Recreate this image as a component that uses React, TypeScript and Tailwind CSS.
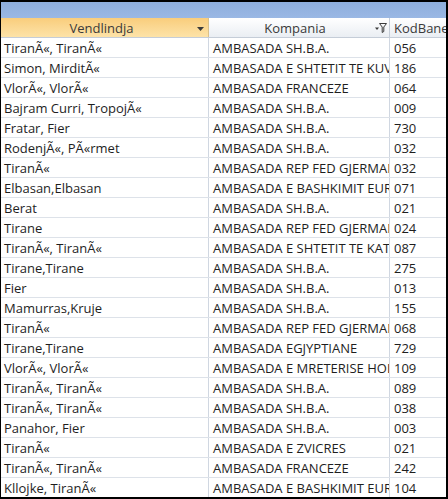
import React from "react";

const rows: [string, string, string][] = [
  ["TiranÃ«, TiranÃ«", "AMBASADA SH.B.A.", "056"],
  ["Simon, MirditÃ«", "AMBASADA E SHTETIT TE KUVAJTIT", "186"],
  ["VlorÃ«, VlorÃ«", "AMBASADA FRANCEZE", "064"],
  ["Bajram Curri, TropojÃ«", "AMBASADA SH.B.A.", "009"],
  ["Fratar, Fier", "AMBASADA SH.B.A.", "730"],
  ["RodenjÃ«, PÃ«rmet", "AMBASADA SH.B.A.", "032"],
  ["TiranÃ«", "AMBASADA REP FED GJERMANE", "032"],
  ["Elbasan,Elbasan", "AMBASADA E BASHKIMIT EUROPIAN", "071"],
  ["Berat", "AMBASADA SH.B.A.", "021"],
  ["Tirane", "AMBASADA REP FED GJERMANE", "024"],
  ["TiranÃ«, TiranÃ«", "AMBASADA E SHTETIT TE KATARIT", "087"],
  ["Tirane,Tirane", "AMBASADA SH.B.A.", "275"],
  ["Fier", "AMBASADA SH.B.A.", "013"],
  ["Mamurras,Kruje", "AMBASADA SH.B.A.", "155"],
  ["TiranÃ«", "AMBASADA REP FED GJERMANE", "068"],
  ["Tirane,Tirane", "AMBASADA EGJYPTIANE", "729"],
  ["VlorÃ«, VlorÃ«", "AMBASADA E MRETERISE HOLANDEZE", "109"],
  ["TiranÃ«, TiranÃ«", "AMBASADA SH.B.A.", "089"],
  ["TiranÃ«, TiranÃ«", "AMBASADA SH.B.A.", "038"],
  ["Panahor, Fier", "AMBASADA SH.B.A.", "003"],
  ["TiranÃ«", "AMBASADA E ZVICRES", "021"],
  ["TiranÃ«, TiranÃ«", "AMBASADA FRANCEZE", "242"],
  ["Kllojke, TiranÃ«", "AMBASADA E BASHKIMIT EUROPIAN", "104"],
];

export default function App() {
  return (
    <div
      className="w-[448px] h-[499px] overflow-hidden bg-black border-t-2 border-l border-r-2 border-b-2 border-black flex flex-col"
      style={{ fontFamily: '"Open Sans", "Noto Sans", sans-serif' }}
    >
      <div className="h-[16px] shrink-0 bg-gradient-to-b from-[#8eaedd] to-[#9ab8e4]" />
      <div className="flex-1 overflow-hidden bg-white text-[13px] leading-[20px] text-[#1e1e1e]">
        {/* header */}
        <div className="flex h-[20px] border-b border-[#c5cdd8]">
          <div className="w-[208px] shrink-0 flex items-center relative bg-gradient-to-b from-[#f9cd7c] to-[#fde3a8] border-r border-[#d9c08a] text-[#3a3a3a]">
            <span className="flex-1 text-center pr-[6px]">Vendlindja</span>
            <svg className="absolute left-[196px] top-[9px]" width="7" height="4" viewBox="0 0 7 4">
              <path d="M0 0 H7 L3.5 4 Z" fill="#3b3b3b" />
            </svg>
          </div>
          <div className="w-[181px] shrink-0 flex items-center relative bg-gradient-to-b from-[#ffffff] to-[#eaeef3] border-r border-[#c5cdd8] text-[#3a3a3a]">
            <span className="flex-1 text-center pr-[8px]">Kompania</span>
            <svg className="absolute left-[166px] top-[5px]" width="12" height="10" viewBox="0 0 12 10">
              <path d="M0 4.5 H4 L2 7 Z" fill="#3b3b3b" />
              <path d="M4.5 0.5 H11.5 L8.8 4 V8.5 L7.2 9.5 V4 Z" fill="none" stroke="#3b3b3b" strokeWidth="1" />
            </svg>
          </div>
          <div className="flex-1 min-w-0 flex items-center pl-[4px] whitespace-nowrap overflow-hidden bg-gradient-to-b from-[#ffffff] to-[#eaeef3] text-[#3a3a3a]">
            <span>KodBanes</span>
          </div>
        </div>
        {rows.map((r, i) => (
          <div key={i} className="flex h-[20px] border-b border-[#dde2e9]">
            <div className="w-[208px] shrink-0 pl-[3px] whitespace-nowrap overflow-hidden text-clip border-r border-[#d0d7e1]">
              {r[0]}
            </div>
            <div className="w-[181px] shrink-0 pl-[4px] whitespace-nowrap overflow-hidden text-clip border-r border-[#d0d7e1]">
              {r[1]}
            </div>
            <div className="flex-1 min-w-0 pl-[4px] whitespace-nowrap overflow-hidden">
              {r[2]}
            </div>
          </div>
        ))}
      </div>
    </div>
  );
}
